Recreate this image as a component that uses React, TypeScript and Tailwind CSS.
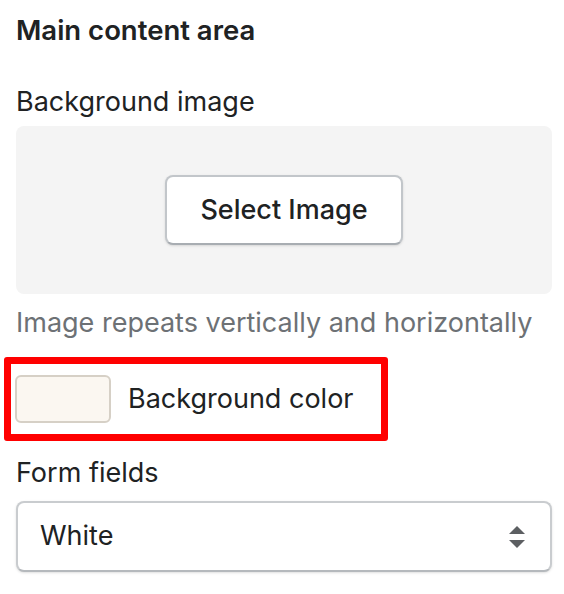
export default function App() {
  return (
    <div
      className="min-h-screen bg-white pl-4 pr-3 pt-[10px] text-[#202223]"
      style={{ fontFamily: "Inter, 'Noto Sans', sans-serif" }}
    >
      {/* Section title */}
      <h2 className="text-[27.5px] font-semibold leading-[40px]">Main content area</h2>

      {/* Background image */}
      <div className="mt-8">
        <p className="text-[27px] leading-[40px]">Background image</p>
        <div className="mt-1 flex h-[168px] items-center justify-center rounded-lg bg-[#f4f4f4]">
          <button className="h-[70px] w-[238px] rounded-lg border-2 border-[#c2c6ca] border-b-[#a8adb2] bg-white text-[27px] font-medium shadow-sm">
            Select Image
          </button>
        </div>
        <p className="mt-[9px] text-[27px] leading-[40px] text-[#6d7175]">
          Image repeats vertically and horizontally
        </p>
      </div>

      {/* Background color (highlighted) */}
      <div className="-ml-3 mt-[14px] flex w-[384px] items-center gap-[17px] rounded-[3px] border-[7px] border-[#ff0000] py-[11px] pl-1">
        <div className="h-12 w-24 rounded-md border-2 border-[#d6d0c6] bg-[#fbf7f1]" />
        <span className="text-[27px] leading-[40px]">Background color</span>
      </div>

      {/* Form fields */}
      <div className="mt-[12px]">
        <p className="text-[27px] leading-[40px]">Form fields</p>
        <div className="mt-2 flex h-[71px] items-center justify-between rounded-lg border-2 border-[#c9cccf] border-b-[#b5b9bd] bg-white pl-[22px] pr-[24px] shadow-sm">
          <span className="text-[27px]">White</span>
          <svg width="18" height="26" viewBox="0 0 18 26" fill="#5c5f62">
            <path d="M9 2 L17 10 H1 Z" />
            <path d="M1 16 H17 L9 24 Z" />
          </svg>
        </div>
      </div>
    </div>
  );
}
